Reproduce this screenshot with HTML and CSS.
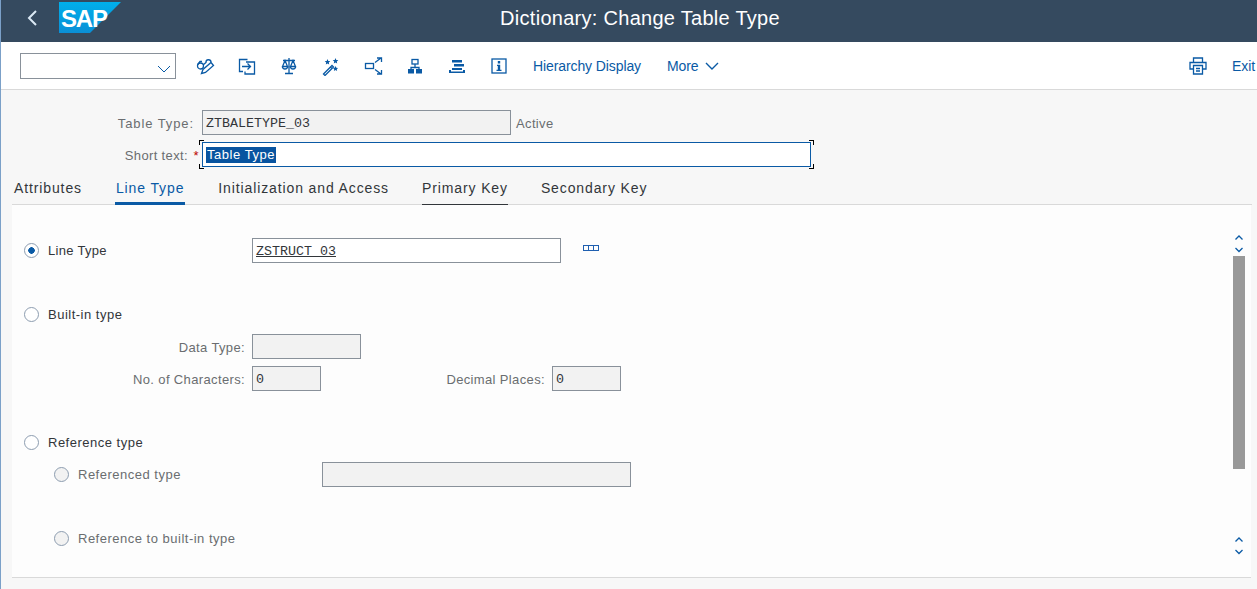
FILE: index.html
```html
<!DOCTYPE html>
<html lang="en">
<head>
  <meta charset="UTF-8" />
  <title>Dictionary: Change Table Type</title>
  <link rel="stylesheet" href="styles.css">
</head>
<body>
  <header class="shell">
    <svg class="back" viewBox="0 0 12 18"><path d="M10 2 3 9l7 7"/></svg>
    <svg class="logo" viewBox="0 0 62 31">
      <defs>
        <linearGradient id="sapBlue" x1="0" y1="0" x2="0" y2="1">
          <stop offset="0" stop-color="#00afeb"/>
          <stop offset="1" stop-color="#0a8fd6"/>
        </linearGradient>
      </defs>
      <path d="M0 0h62L31 31H0z" fill="url(#sapBlue)"/>
      <text x="2" y="24.5" class="logo-text">SAP</text>
    </svg>
    <h1 class="title">Dictionary: Change Table Type</h1>
  </header>

  <div class="toolbar">
    <div class="combo">
      <svg class="combo-arrow" viewBox="0 0 14 8"><path d="M1 1l6 6 6-6"/></svg>
    </div>
    <div class="tools">
      <button class="tool">
        <svg viewBox="0 0 20 20"><circle cx="5.500" cy="10" r="3"/><path d="M2.800 8.500 5 5.500h2M8.300 8.800l2.700-2.300a2.500 2.500 0 0 1 5-.5"/><path d="M6.500 17.500 8 13.500 16 6.500l2.500 3-8 7z"/></svg>
      </button>
      <button class="tool">
        <svg viewBox="0 0 20 20"><path d="M10.500 3.500H2.500v12H6M9 6h8.500v12H8v-2.500M5 10.500h8.500M10.500 7.500l3 3-3 3"/></svg>
      </button>
      <button class="tool">
        <svg viewBox="0 0 20 20"><path d="M10 2v15.500M6 17.500h8M4 4.500h12M6 4.500 3.500 10.500h5zM14 4.500l-2.500 6h5z"/><path d="M3.500 10.500a2.500 2.500 0 0 0 5 0M11.500 10.500a2.500 2.500 0 0 0 5 0"/></svg>
      </button>
      <button class="tool">
        <svg viewBox="0 0 20 20"><path d="M2.500 18 11 9.500l1.500 1.500L4 19.500zM9.500 11l1.500 1.500"/><path class="fill" d="m6.500 3 .8 1.900 2 .2-1.500 1.400.4 2-1.700-1-1.700 1 .4-2-1.500-1.400 2-.2zM14.500 2l.8 1.900 2 .2-1.500 1.400.4 2-1.700-1-1.700 1 .4-2-1.500-1.400 2-.2zM14.500 10l.8 1.700 1.700.3-1.200 1.200.3 1.800-1.600-.9-1.600.9.300-1.800-1.200-1.200 1.700-.3z"/></svg>
      </button>
      <button class="tool">
        <svg viewBox="0 0 20 20"><rect x="2.500" y="7.500" width="8" height="5"/><path d="M12 6.500 18 2M14 2h4.500v4M12 13.500l6 4.500M14 18h4.500v-4"/></svg>
      </button>
      <button class="tool">
        <svg viewBox="0 0 20 20"><rect x="7" y="3.500" width="6" height="4.500"/><path d="M10 8v3.500M6 13v-1.500h8V13"/><rect class="fill" x="3" y="13" width="6" height="4.500"/><rect class="fill" x="11" y="13" width="6" height="4.500"/></svg>
      </button>
      <button class="tool">
        <svg viewBox="0 0 20 20"><path class="fill" d="M5 4h10v2.500H5zM7 8h10v2.500H7zM5 12h10v2H5zM2 14h2v1.500h12V14h2v3H2z"/></svg>
      </button>
      <button class="tool">
        <svg viewBox="0 0 20 20"><rect x="3" y="3" width="14" height="14"/><path class="fill" d="M8.800 5h2.400v2.400H8.800zM8 8.800h3.200v5h1.300V15h-5v-1.200h1.300V10H8z"/></svg>
      </button>
    </div>
    <a class="link hierarchy">Hierarchy Display</a>
    <a class="link more">More
      <svg class="more-arrow" viewBox="0 0 14 8"><path d="M1 1l6 6 6-6"/></svg>
    </a>
    <div class="toolbar-end">
      <svg class="print" viewBox="0 0 20 20"><path d="M5.500 6V2h9v4M5 13H2V6.500h16V13h-3M5.500 9.500h9V18h-9zM8 12.500h4M8 15h4"/></svg>
      <a class="link exit">Exit</a>
    </div>
  </div>

  <main class="main">
    <div class="row head-row">
      <label class="lbl head-lbl lbl-wide">Table Type:</label>
      <div class="field readonly mono w-309">ZTBALETYPE_03</div>
      <span class="lbl status">Active</span>
    </div>
    <div class="row head-row">
      <label class="lbl head-lbl lbl-req">Short text:<span class="req">*</span></label>
      <div class="field focused w-609">
        <span class="selected">Table Type</span>
        <i class="corner tl"></i><i class="corner tr"></i><i class="corner bl"></i><i class="corner br"></i>
      </div>
    </div>

    <nav class="tabs">
      <a class="tab">Attributes</a>
      <a class="tab tab-active">Line Type</a>
      <a class="tab">Initialization and Access</a>
      <a class="tab tab-marked">Primary Key</a>
      <a class="tab">Secondary Key</a>
    </nav>

    <section class="panel">
      <div class="panel-form">
        <div class="row">
          <span class="radio radio-on"></span>
          <span class="opt opt-short w-204">Line Type</span>
          <div class="field mono under w-309">ZSTRUCT_03</div>
          <svg class="search-help" viewBox="0 0 16 6"><rect x=".5" y=".5" width="15" height="5"/><path d="M5.500 1v4M10.500 1v4"/></svg>
        </div>
        <div class="row"></div>
        <div class="row">
          <span class="radio"></span>
          <span class="opt">Built-in type</span>
        </div>
        <div class="row">
          <label class="lbl w-222">Data Type:</label>
          <div class="field readonly w-109"></div>
        </div>
        <div class="row">
          <label class="lbl w-222">No. of Characters:</label>
          <div class="field readonly mono w-69">0</div>
          <label class="lbl w-224">Decimal Places:</label>
          <div class="field readonly mono w-69">0</div>
        </div>
        <div class="row"></div>
        <div class="row">
          <span class="radio"></span>
          <span class="opt">Reference type</span>
        </div>
        <div class="row indent">
          <span class="radio radio-off"></span>
          <span class="opt opt-off w-244">Referenced type</span>
          <div class="field readonly w-309"></div>
        </div>
        <div class="row"></div>
        <div class="row indent">
          <span class="radio radio-off"></span>
          <span class="opt opt-off">Reference to built-in type</span>
        </div>
      </div>
      <div class="scroll">
        <svg class="scroll-arrows" viewBox="0 0 12 22"><path d="M2.500 5.500 6 2l3.500 3.500M2.500 14 6 17.500 9.500 14"/></svg>
        <div class="thumb"></div>
        <svg class="scroll-arrows scroll-end" viewBox="0 0 12 22"><path d="M2.500 5.500 6 2l3.500 3.500M2.500 14 6 17.500 9.500 14"/></svg>
      </div>
    </section>
  </main>
</body>
</html>
```

FILE: styles.css
```css
* {
  box-sizing: border-box;
}

html,
body {
  height: 100%;
}

body {
  margin: 0;
  overflow: hidden;
  background: #f7f7f7;
  border-left: 1px solid #7ba0c8;
  font-family: 'Liberation Sans', Arial, sans-serif;
  font-size: 13px;
  color: #32363a;
}

/* shell header */
.shell {
  display: flex;
  align-items: flex-start;
  height: 42px;
  background: #354a5f;
}

.back {
  width: 12px;
  height: 18px;
  margin: 9px 0 0 25px;
  fill: none;
  stroke: #dbe9f5;
  stroke-width: 2;
}

.logo {
  width: 62px;
  height: 31px;
  margin: 2px 0 0 21px;
}

.logo-text {
  font-family: 'Liberation Sans', Arial, sans-serif;
  font-weight: bold;
  font-size: 24px;
  letter-spacing: -1.2px;
  fill: #fff;
}

.title {
  margin: 0;
  flex: 1;
  padding-right: 98px;
  text-align: center;
  font-size: 20px;
  font-weight: normal;
  letter-spacing: .28px;
  line-height: 36px;
  color: #fff;
}

/* toolbar */
.toolbar {
  display: flex;
  align-items: center;
  height: 48px;
  padding: 1px 0 0 19px;
  background: #fff;
  border-bottom: 1px solid #d9d9d9;
}

.combo {
  position: relative;
  width: 156px;
  height: 26px;
  background: #fff;
  border: 1px solid #89919a;
}

.combo-arrow {
  position: absolute;
  right: 4px;
  top: 11px;
  width: 14px;
  height: 8px;
  fill: none;
  stroke: #0a5aa5;
  stroke-width: 1;
}

.tools {
  display: flex;
  margin-left: 8px;
}

.tool {
  display: flex;
  align-items: center;
  justify-content: center;
  width: 42px;
  height: 32px;
  padding: 0;
  background: none;
  border: none;
}

.tool svg,
.print {
  width: 20px;
  height: 20px;
  fill: none;
  stroke: #0a5aa5;
  stroke-width: 1.300;
}

.tool svg .fill {
  fill: #0a5aa5;
  stroke: none;
}

.link {
  font-size: 14px;
  letter-spacing: -.1px;
  color: #0a5aa5;
}

.hierarchy {
  margin-left: 13px;
}

.more {
  display: flex;
  align-items: center;
  margin-left: 26px;
}

.more-arrow {
  width: 14px;
  height: 8px;
  margin-left: 6px;
  fill: none;
  stroke: #0a5aa5;
  stroke-width: 1.400;
}

.toolbar-end {
  display: flex;
  align-items: center;
  margin-left: auto;
}

.exit {
  margin: 0 2px 0 24px;
}

/* form rows */
.main {
  padding-top: 16px;
}

.row {
  display: flex;
  align-items: flex-start;
  height: 32px;
  padding-top: 4px;
}

.head-row {
  padding-left: 201px;
}

.lbl {
  display: block;
  line-height: 27px;
  letter-spacing: .36px;
  text-align: right;
  color: #6a6d70;
  padding-right: 7px;
}

.head-lbl {
  position: relative;
  flex: none;
  width: 201px;
  margin-left: -201px;
  padding-right: 8px;
}

.lbl-wide {
  letter-spacing: .9px;
}

.lbl-req {
  padding-right: 14px;
}

.req {
  position: absolute;
  right: 3px;
  top: 0;
  color: #bb0000;
}

.status {
  padding: 0 0 0 5px;
}

.field {
  position: relative;
  flex: none;
  height: 25px;
  padding: 0 3px;
  line-height: 25px;
  background: #fff;
  border: 1px solid #89919a;
}

.readonly {
  background: #f2f2f2;
}

.mono {
  font-family: 'Liberation Mono', 'DejaVu Sans Mono', monospace;
  font-size: 13.330px;
}

.under {
  text-decoration: underline;
}

.focused {
  border-color: #0a5aa5;
}

.selected {
  display: inline-block;
  height: 16px;
  padding: 0 1px;
  line-height: 16px;
  letter-spacing: .55px;
  color: #fff;
  background: #0854a0;
  vertical-align: top;
  margin-top: 4px;
}

.corner {
  position: absolute;
  width: 5px;
  height: 5px;
  border: 0 solid #000;
}

.tl { left: -4px; top: -3px; border-width: 1px 0 0 1px; }
.tr { right: -4px; top: -3px; border-width: 1px 1px 0 0; }
.bl { left: -4px; bottom: -3px; border-width: 0 0 1px 1px; }
.br { right: -4px; bottom: -3px; border-width: 0 1px 1px 0; }

.w-69 { width: 69px; }
.w-109 { width: 109px; }
.w-204 { width: 204px; flex: none; }
.w-222 { width: 229px; flex: none; }
.w-224 { width: 231px; flex: none; }
.w-244 { width: 244px; flex: none; }
.w-309 { width: 309px; }
.w-609 { width: 609px; }

/* tabs */
.tabs {
  display: flex;
  gap: 33px;
  height: 35px;
  margin-left: 11px;
  margin-right: 5px;
  padding-left: 2px;
  border-bottom: 1px solid #d9d9d9;
}

.tab {
  height: 35px;
  padding-top: 10px;
  font-size: 14px;
  letter-spacing: .88px;
  color: #32363a;
}

.tab-active {
  padding-left: 1px;
  padding-right: 1px;
  color: #0a5aa5;
  border-bottom: 3px solid #0a5aa5;
}

.tab-marked {
  border-bottom: 1px solid #32363a;
}

/* panel */
.panel {
  display: flex;
  height: 373px;
  margin: 0 6px 0 11px;
  background: #fdfdfd;
  border-bottom: 1px solid #d9d9d9;
}

.panel-form {
  flex: 1;
  padding: 29px 0 0 11px;
}

.indent {
  padding-left: 30px;
}

.radio {
  flex: none;
  width: 15px;
  height: 15px;
  margin: 5px 9px 0 1px;
  background: #fff;
  border: 1px solid #8d9db0;
  border-radius: 50%;
}

.radio-on {
  background: radial-gradient(circle, #0a5aa5 0 3px, #fff 3.500px);
}

.radio-off {
  background: #f2f2f2;
}

.opt {
  line-height: 25px;
  letter-spacing: .5px;
}

.opt-short {
  letter-spacing: .3px;
}

.opt-off {
  color: #6a6d70;
}

.search-help {
  width: 16px;
  height: 6px;
  margin: 7px 0 0 22px;
  fill: none;
  stroke: #1f5fb0;
}

/* scroll column */
.scroll {
  display: flex;
  flex-direction: column;
  flex: none;
  width: 12px;
  margin-right: 6px;
  padding-top: 29px;
}

.scroll-arrows {
  flex: none;
  width: 12px;
  height: 22px;
  fill: none;
  stroke: #0a5aa5;
  stroke-width: 1.300;
}

.thumb {
  flex: none;
  height: 213px;
  background: #999;
}

.scroll-end {
  margin-top: 67px;
}
```
